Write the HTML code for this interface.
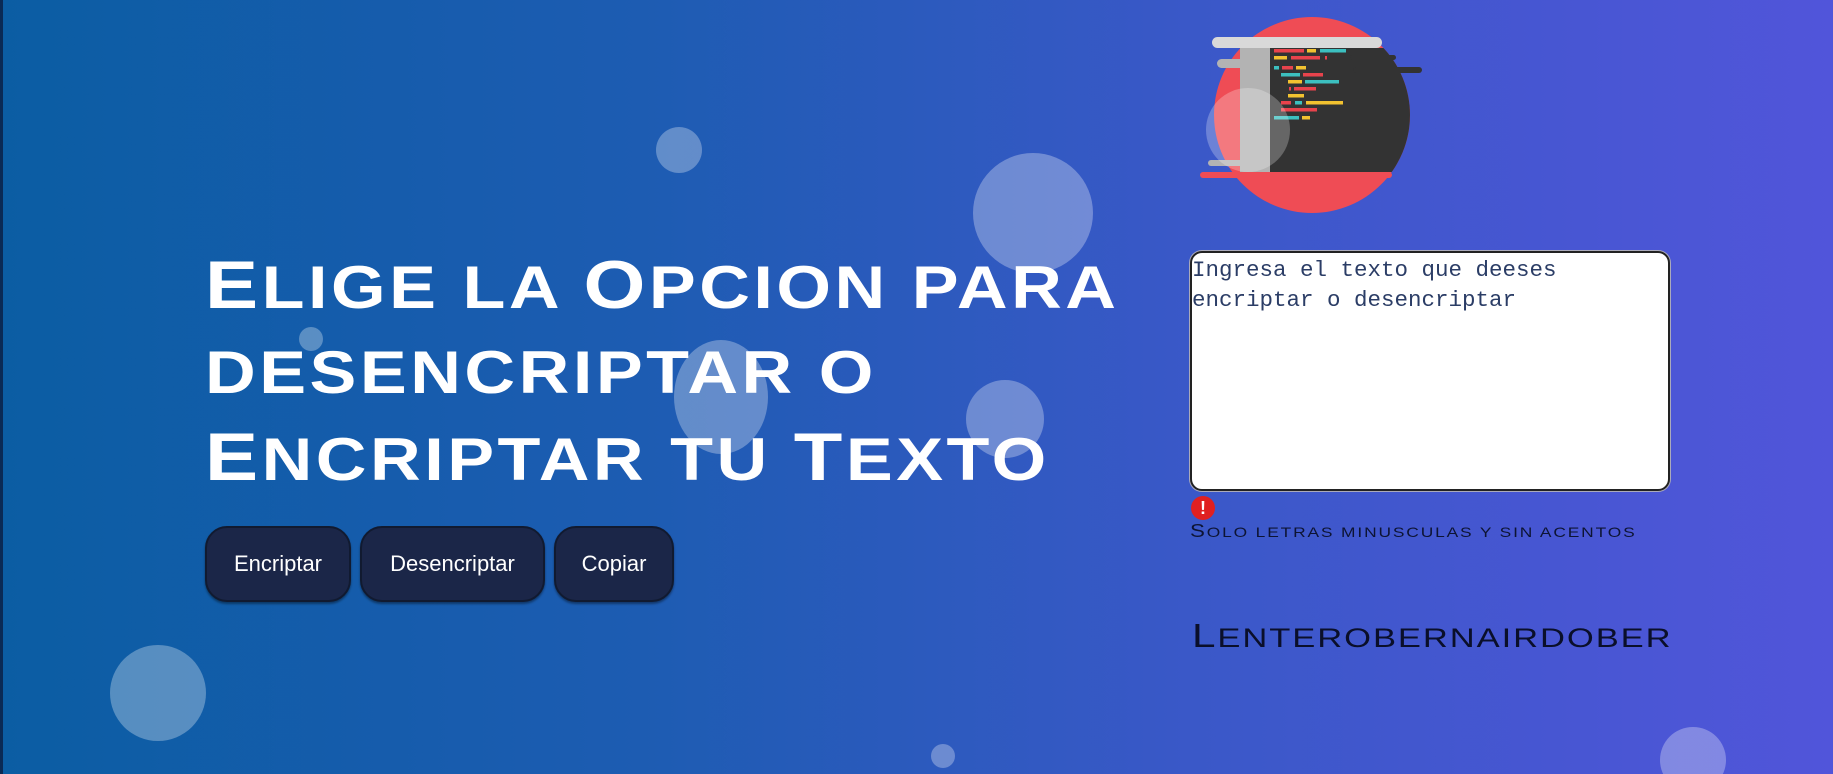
<!DOCTYPE html>
<html><head><meta charset="utf-8"><style>
html,body{margin:0;padding:0;width:1833px;height:774px;overflow:hidden}
body{position:relative;background:linear-gradient(90deg,#0b5da3 0%,#1d5cb2 35%,#3a58c8 65%,#5155da 100%);font-family:"Liberation Sans",sans-serif}
.b{position:absolute;border-radius:50%;background:rgba(255,255,255,0.3)}
.t{position:absolute;left:205px;height:86px;margin:0;color:#fff;font-size:68px;line-height:86px;font-weight:bold;letter-spacing:3px;transform:scaleX(1.17);transform-origin:left top;white-space:nowrap;text-transform:uppercase}
.t .s{font-size:60px}
.btn{position:absolute;top:526px;height:76px;background:#1b2648;color:#fff;border:2px solid #111a30;border-radius:22px;box-sizing:border-box;font-size:22px;display:flex;align-items:center;justify-content:center;box-shadow:0 2px 2px rgba(0,0,0,.4)}
.ta{position:absolute;left:1190px;top:251px;width:480px;height:240px;background:#fff;border:2px solid #222;border-radius:12px;box-sizing:border-box;box-shadow:0 0 0 1px #aab}
.ta div{font-family:"Liberation Mono",monospace;font-size:22.5px;line-height:30px;color:#2b3d66;padding:2px 0 0 0}
.warn{position:absolute;left:1191px;top:496px;width:24px;height:24px;border-radius:50%;background:#e02020;color:#fff;font-weight:bold;font-size:18px;text-align:center;line-height:24px}
.sm{position:absolute;left:1190px;top:521px;color:#0d1433;font-size:18px;letter-spacing:1.5px;white-space:nowrap;text-transform:uppercase;transform:scaleX(1.24);transform-origin:left}
.sm .s{font-size:14px}
.nm{position:absolute;left:1192px;top:617px;color:#0a0f2a;font-size:33px;letter-spacing:1.5px;white-space:nowrap;text-transform:uppercase;transform:scaleX(1.28);transform-origin:left}
.nm .s{font-size:27px}
</style></head><body>
<div style="position:absolute;left:0;top:0;width:3px;height:774px;background:#0a2a55"></div>
<div class="b" style="left:656px;top:127px;width:46px;height:46px"></div>
<div class="b" style="left:973px;top:153px;width:120px;height:120px"></div>
<div class="b" style="left:299px;top:327px;width:24px;height:24px"></div>
<div class="b" style="left:674px;top:340px;width:94px;height:114px"></div>
<div class="b" style="left:966px;top:380px;width:78px;height:78px"></div>
<div class="b" style="left:110px;top:645px;width:96px;height:96px"></div>
<div class="b" style="left:931px;top:744px;width:24px;height:24px"></div>
<div class="b" style="left:1660px;top:727px;width:66px;height:66px"></div>
<svg style="position:absolute;left:0;top:0" width="1833" height="774">
<defs><clipPath id="c"><circle cx="1312" cy="115" r="98"/></clipPath></defs>
<circle cx="1312" cy="115" r="98" fill="#ef4c55"/>
<rect x="1270" y="48" width="160" height="124" fill="#333" clip-path="url(#c)"/>
<rect x="1240" y="48" width="30" height="124" fill="#b3b3b3"/>
<rect x="1212" y="37" width="170" height="11" rx="5.5" fill="#d9d9d9"/>
<rect x="1217" y="59" width="53" height="9" rx="4.5" fill="#b3b3b3"/>
<rect x="1350" y="55" width="46" height="5" rx="2.5" fill="#333"/>
<rect x="1353" y="67" width="69" height="6" rx="3" fill="#333"/>
<rect x="1208" y="160" width="37" height="6" rx="3" fill="#b3b3b3"/>
<rect x="1200" y="172" width="192" height="6" rx="3" fill="#ef4c55"/>
<g>
<rect x="1274" y="49" width="30" height="3.5" fill="#e8434c"/><rect x="1307" y="49" width="9" height="3.5" fill="#f2c230"/><rect x="1320" y="49" width="26" height="3.5" fill="#3cc0c0"/>
<rect x="1274" y="56" width="13" height="3.5" fill="#f2c230"/><rect x="1291" y="56" width="29" height="3.5" fill="#e8434c"/><rect x="1325" y="56" width="2" height="3.5" fill="#e8434c"/>
<rect x="1274" y="66" width="5" height="3.5" fill="#3cc0c0"/><rect x="1282" y="66" width="11" height="3.5" fill="#e8434c"/><rect x="1296" y="66" width="10" height="3.5" fill="#f2c230"/>
<rect x="1281" y="73" width="19" height="3.5" fill="#3cc0c0"/><rect x="1303" y="73" width="20" height="3.5" fill="#e8434c"/>
<rect x="1288" y="80" width="14" height="3.5" fill="#f2c230"/><rect x="1305" y="80" width="34" height="3.5" fill="#3cc0c0"/>
<rect x="1289" y="87" width="2" height="3.5" fill="#e8434c"/><rect x="1294" y="87" width="22" height="3.5" fill="#e8434c"/>
<rect x="1288" y="94" width="16" height="3.5" fill="#f2c230"/>
<rect x="1281" y="101" width="10" height="3.5" fill="#e8434c"/><rect x="1295" y="101" width="7" height="3.5" fill="#3cc0c0"/><rect x="1306" y="101" width="37" height="3.5" fill="#f2c230"/>
<rect x="1281" y="108" width="36" height="3.5" fill="#e8434c"/>
<rect x="1274" y="116" width="25" height="3.5" fill="#3cc0c0"/><rect x="1302" y="116" width="8" height="3.5" fill="#f2c230"/>
</g>
<circle cx="1248" cy="130" r="42" fill="rgba(255,255,255,0.25)"/>
</svg>
<div class="t" style="top:242px">E<span class="s">lige la </span>O<span class="s">pcion para</span></div>
<div class="t" style="top:327px"><span class="s">desencriptar o</span></div>
<div class="t" style="top:414px">E<span class="s">ncriptar tu </span>T<span class="s">exto</span></div>
<div class="btn" style="left:205px;width:146px">Encriptar</div>
<div class="btn" style="left:360px;width:185px">Desencriptar</div>
<div class="btn" style="left:554px;width:120px">Copiar</div>
<div class="ta"><div>Ingresa el texto que deeses<br>encriptar o desencriptar</div></div>
<div class="warn">!</div>
<div class="sm">S<span class="s">olo letras minusculas y sin acentos</span></div>
<div class="nm">L<span class="s">enterobernairdober</span></div>
</body></html>
